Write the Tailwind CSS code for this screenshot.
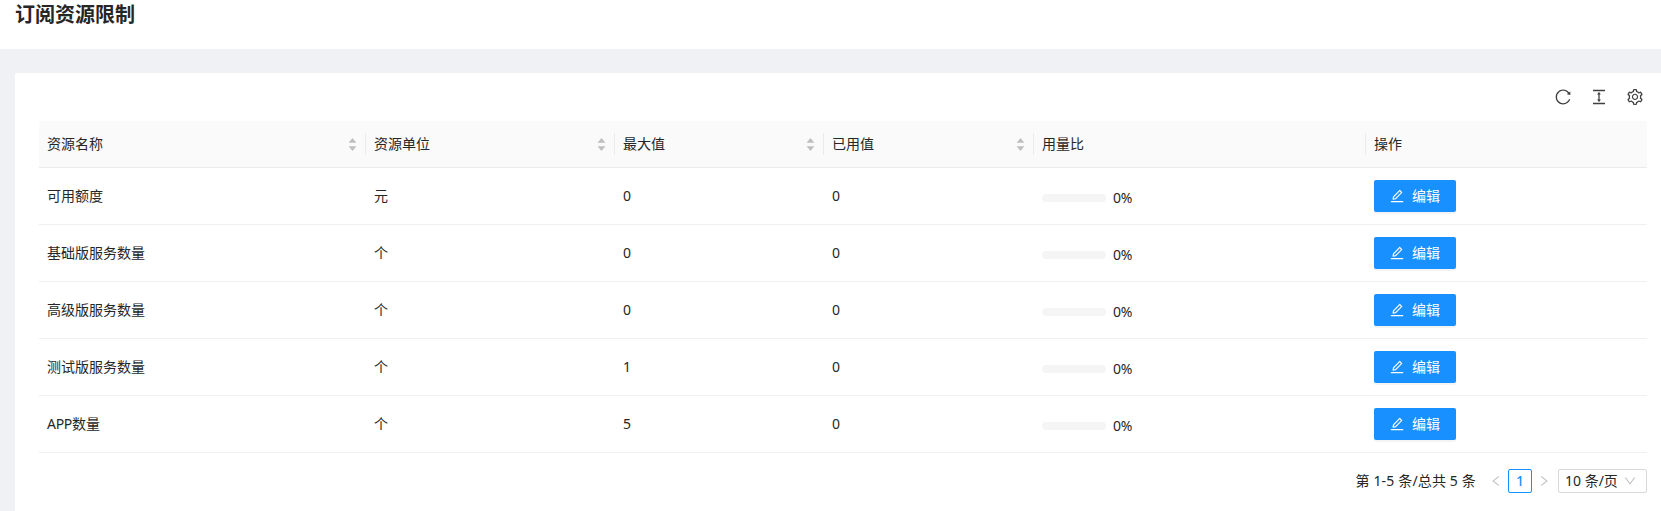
<!DOCTYPE html>
<html lang="zh-CN">
<head>
<meta charset="utf-8">
<title>订阅资源限制</title>
<script src="https://cdn.jsdelivr.net/npm/@tailwindcss/browser@4"></script>
</head>
<body class="h-[511px] overflow-hidden bg-[#f0f1f5] font-['Noto_Sans','Noto_Sans_CJK_SC',sans-serif] text-sm leading-[22px] text-[#262626]">
<svg class="hidden">
  <symbol id="up" viewBox="0 0 1024 1024"><path d="M858.9 689L530.5 308.2c-9.4-10.9-27.5-10.9-37 0L165.1 689c-12.2 14.2-1.2 35 18.5 35h656.8c19.7 0 30.7-20.8 18.5-35z"/></symbol>
  <symbol id="down" viewBox="0 0 1024 1024"><path d="M840.4 300H183.6c-19.7 0-30.7 20.8-18.5 35l328.4 380.8c9.4 10.9 27.6 10.9 37 0L858.9 335c12.2-14.2 1.2-35-18.5-35z"/></symbol>
  <symbol id="edit" viewBox="64 64 896 896"><path d="M257.7 752c2 0 4-.2 6-.5L431.9 722c2-.4 3.9-1.3 5.3-2.8l423.9-423.9a9.96 9.96 0 000-14.1L694.9 114.9c-1.9-1.9-4.4-2.9-7.1-2.9s-5.2 1-7.1 2.9L256.8 538.8c-1.5 1.5-2.4 3.3-2.8 5.3l-29.5 168.2a33.5 33.5 0 009.4 29.8c6.6 6.4 14.9 9.9 23.8 9.9zm67.4-174.4L687.8 215l73.3 73.3-362.7 362.6-88.9 15.7 15.6-89zM880 836H144c-17.7 0-32 14.3-32 32v36c0 4.4 3.6 8 8 8h784c4.4 0 8-3.6 8-8v-36c0-17.7-14.3-32-32-32z"/></symbol>
</svg>

<header class="h-[49px] bg-white pl-[15px]">
  <h1 class="-translate-y-px text-xl leading-8 font-bold">订阅资源限制</h1>
</header>

<main class="mt-6 ml-[15px] h-[438px] rounded-tl-[2px] bg-white pr-[14px] pl-6">
  <div class="flex h-12 items-center justify-end gap-5 pr-1 text-[#404040]">
    <svg class="size-4" viewBox="64 64 896 896" fill="currentColor"><path d="M909.1 209.3l-56.4 44.1C775.8 155.1 656.2 92 521.9 92 290 92 102.3 279.5 102 511.5 101.7 743.7 289.8 932 521.9 932c181.3 0 335.8-115 394.6-276.1 1.5-4.2-.7-8.9-4.9-10.3l-56.7-19.5a8 8 0 00-10.1 4.8c-1.8 5-3.8 10-5.9 14.9-17.3 41-42.1 77.8-73.7 109.4A344.77 344.77 0 01655.9 829c-42.3 17.9-87.4 27-133.8 27-46.5 0-91.5-9.1-133.8-27A341.5 341.5 0 01279 755.2a342.16 342.16 0 01-73.7-109.4c-17.9-42.4-27-87.4-27-133.9s9.1-91.5 27-133.9c17.3-41 42.1-77.8 73.7-109.4 31.6-31.6 68.4-56.4 109.3-73.8 42.3-17.9 87.4-27 133.8-27 46.5 0 91.5 9.1 133.8 27a341.5 341.5 0 01109.3 73.8c9.9 9.9 19.2 20.4 27.8 31.4l-60.2 47a8 8 0 003 14.1l175.6 43c5 1.2 9.9-2.6 9.9-7.7l.8-180.9c-.1-6.6-7.8-10.3-13-6.2z"/></svg>
    <svg class="size-4" viewBox="64 64 896 896" fill="currentColor"><path d="M840 836H184c-4.4 0-8 3.6-8 8v60c0 4.4 3.6 8 8 8h656c4.4 0 8-3.6 8-8v-60c0-4.4-3.6-8-8-8zm0-724H184c-4.4 0-8 3.6-8 8v60c0 4.4 3.6 8 8 8h656c4.4 0 8-3.6 8-8v-60c0-4.4-3.6-8-8-8zM610.8 378c6 0 9.4-7 5.7-11.7L515.7 238.7a7.14 7.14 0 00-11.3 0L403.6 366.3a7.23 7.23 0 005.7 11.7H476v268h-62.8c-6 0-9.4 7-5.7 11.7l100.8 127.5c2.9 3.7 8.5 3.7 11.3 0l100.8-127.5c3.7-4.7.4-11.7-5.7-11.7H548V378h62.8z"/></svg>
    <svg class="size-4" viewBox="64 64 896 896" fill="currentColor"><path d="M924.8 625.7l-65.5-56c3.1-19 4.7-38.4 4.7-57.8s-1.6-38.8-4.7-57.8l65.5-56a32.03 32.03 0 009.3-35.2l-.9-2.6a443.74 443.74 0 00-79.7-137.9l-1.8-2.1a32.12 32.12 0 00-35.1-9.5l-81.3 28.9c-30-24.6-63.5-44-99.7-57.6l-15.7-85a32.05 32.05 0 00-25.8-25.7l-2.7-.5c-52.1-9.4-106.9-9.4-159 0l-2.7.5a32.05 32.05 0 00-25.8 25.7l-15.8 85.4a351.86 351.86 0 00-99 57.4l-81.9-29.1a32 32 0 00-35.1 9.5l-1.8 2.1a446.02 446.02 0 00-79.7 137.9l-.9 2.6c-4.5 12.5-.8 26.5 9.3 35.2l66.3 56.6c-3.1 18.8-4.6 38-4.6 57.1 0 19.2 1.5 38.4 4.6 57.1L99 625.5a32.03 32.03 0 00-9.3 35.2l.9 2.6c18.1 50.4 44.9 96.9 79.7 137.9l1.8 2.1a32.12 32.12 0 0035.1 9.5l81.9-29.1c29.8 24.5 63.1 43.9 99 57.4l15.8 85.4a32.05 32.05 0 0025.8 25.7l2.7.5a449.4 449.4 0 00159 0l2.7-.5a32.05 32.05 0 0025.8-25.7l15.7-85a350 350 0 0099.7-57.6l81.3 28.9a32 32 0 0035.1-9.5l1.8-2.1c34.8-41.1 61.6-87.5 79.7-137.9l.9-2.6c4.5-12.3.8-26.3-9.3-35zM788.3 465.9c2.5 15.1 3.8 30.6 3.8 46.1s-1.3 31-3.8 46.1l-6.6 40.1 74.7 63.9a370.03 370.03 0 01-42.6 73.6L721 702.8l-31.4 25.8c-23.9 19.6-50.5 35-79.3 45.8l-38.1 14.3-17.9 97a377.5 377.5 0 01-85 0l-17.9-97.2-37.8-14.5c-28.5-10.8-55-26.2-78.7-45.7l-31.4-25.9-93.4 33.2c-17-22.9-31.2-47.6-42.6-73.6l75.5-64.5-6.5-40c-2.4-14.9-3.7-30.3-3.7-45.5 0-15.3 1.2-30.6 3.7-45.5l6.5-40-75.5-64.5c11.3-26.1 25.6-50.7 42.6-73.6l93.4 33.2 31.4-25.9c23.7-19.5 50.2-34.9 78.7-45.7l37.9-14.3 17.9-97.2c28.1-3.2 56.8-3.2 85 0l17.9 97 38.1 14.3c28.7 10.8 55.4 26.2 79.3 45.8l31.4 25.8 92.8-32.9c17 22.9 31.2 47.6 42.6 73.6L781.8 426l6.5 39.9zM512 326c-97.2 0-176 78.8-176 176s78.8 176 176 176 176-78.8 176-176-78.8-176-176-176zm79.2 255.2A111.6 111.6 0 01512 614c-29.9 0-58-11.7-79.2-32.8A111.6 111.6 0 01400 502c0-29.9 11.7-58 32.8-79.2C454 401.6 482.1 390 512 390c29.9 0 58 11.6 79.2 32.8A111.6 111.6 0 01624 502c0 29.9-11.7 58-32.8 79.2z"/></svg>
  </div>

  <div id="head" class="grid h-[47px] grid-cols-[327px_249px_209px_210px_332px_281px] items-center rounded-t-[2px] border-b border-[#ebebeb] bg-[#fafafa]"></div>
  <div id="rows"></div>

  <div class="mt-4 flex h-6 items-center justify-end">
    <span class="mr-2 tracking-[0.16px]">第 1-5 条/总共 5 条</span>
    <span class="flex size-6 items-center justify-center text-[#bfbfbf]"><svg class="size-3" viewBox="64 64 896 896" fill="currentColor"><path d="M724 218.3V141c0-6.7-7.7-10.4-12.9-6.3L260.3 486.8a31.86 31.86 0 000 50.3l450.8 352.1c5.3 4.1 12.9.4 12.9-6.3v-77.3c0-4.9-2.3-9.6-6.1-12.6l-360-281 360-281.1c3.8-3 6.1-7.7 6.1-12.6z"/></svg></span>
    <span class="flex size-6 items-center justify-center rounded-[2px] border border-[#1890ff] font-medium text-[#1890ff]">1</span>
    <span class="flex size-6 items-center justify-center text-[#bfbfbf]"><svg class="size-3" viewBox="64 64 896 896" fill="currentColor"><path d="M765.7 486.8L314.9 134.7A7.97 7.97 0 00302 141v77.3c0 4.9 2.3 9.6 6.1 12.6l360 281.1-360 281.1c-3.9 3-6.1 7.7-6.1 12.6V883c0 6.7 7.7 10.4 12.9 6.3l450.8-352.1a31.96 31.96 0 000-50.4z"/></svg></span>
    <span class="ml-0.5 flex h-6 w-[89px] items-center justify-between rounded-[2px] border border-[#d9d9d9] pr-[10px] pl-1.5"><span>10 条/页</span><svg class="size-3 text-[#bfbfbf]" viewBox="64 64 896 896" fill="currentColor"><path d="M884 256h-75c-5.1 0-9.9 2.5-12.9 6.6L512 654.2 227.9 262.6c-3-4.1-7.8-6.6-12.9-6.6h-75c-6.5 0-10.3 7.4-6.5 12.7l352.6 486.1c12.8 17.6 39 17.6 51.7 0l352.6-486.1c3.9-5.3.1-12.7-6.4-12.7z"/></svg></span>
  </div>
</main>

<script>
const sorter = '<span class="flex flex-col text-[#bfbfbf]"><svg class="size-[11px]" fill="currentColor"><use href="#up"/></svg><svg class="-mt-[3px] size-[11px]" fill="currentColor"><use href="#down"/></svg></span>';
const columns = [['资源名称', 1], ['资源单位', 1], ['最大值', 1], ['已用值', 1], ['用量比', 0], ['操作', 0]];
document.getElementById('head').innerHTML = columns.map(([name, sortable], i) =>
  `<div class="flex h-[22px] items-center justify-between pl-2 ${i < 5 ? 'border-r border-[#ebebeb] pr-[7px]' : ''}"><span>${name}</span>${sortable ? sorter : ''}</div>`).join('');

const data = [['可用额度', '元', 0, 0], ['基础版服务数量', '个', 0, 0], ['高级版服务数量', '个', 0, 0], ['测试版服务数量', '个', 1, 0], ['<span class="tracking-[-0.3px]">APP</span>数量', '个', 5, 0]];
document.getElementById('rows').innerHTML = data.map(r => `
  <div class="grid h-[57px] grid-cols-[327px_249px_209px_210px_332px_281px] items-center border-b border-[#f0f0f0]">
    ${r.map(v => `<div class="pl-2">${v}</div>`).join('')}
    <div class="flex items-center gap-[7px] pt-1 pl-2"><span class="h-2 w-16 rounded-full bg-[#f5f5f5]"></span><span class="tracking-[-0.2px]">0%</span></div>
    <div class="pl-2"><button class="flex h-8 w-[82px] items-center justify-center gap-2 rounded-[2px] bg-[#1890ff] text-white shadow-[0_2px_0_rgba(0,0,0,0.045)]"><svg class="size-3.5" fill="currentColor"><use href="#edit"/></svg><span>编辑</span></button></div>
  </div>`).join('');
</script>
</body>
</html>
